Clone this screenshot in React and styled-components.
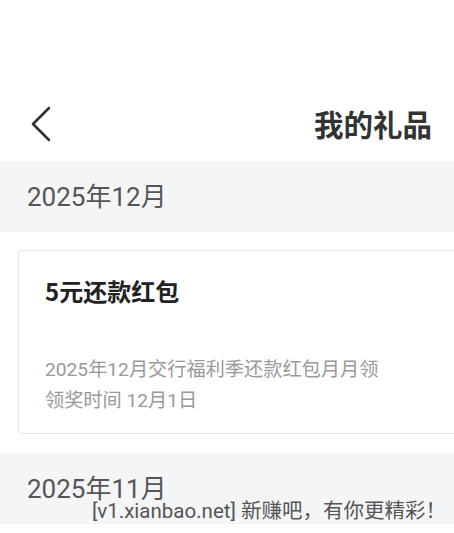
import React from 'react';
import styled, { createGlobalStyle } from 'styled-components';

const GlobalStyle = createGlobalStyle`
  html, body {
    margin: 0;
    padding: 0;
    background: #ffffff;
  }
  body {
    font-family: Roboto, "Noto Sans CJK SC", sans-serif;
    overflow: hidden;
  }
`;

const gifts = [
    {
        month: '2025年12月',
        items: [
            {
                title: '5元还款红包',
                desc: '2025年12月交行福利季还款红包月月领',
                time: '领奖时间 12月1日'
            }
        ]
    },
    {
        month: '2025年11月',
        items: []
    }
];

function BackIcon() {
    return (
        <svg width="24" height="36" viewBox="0 0 24 36" fill="none">
            <path d="M19 2 L3 18 L19 34" stroke="#333" strokeWidth="2.6" strokeLinecap="round" strokeLinejoin="round" />
        </svg>
    );
}

export default function App() {
    return (
        <Page>
            <GlobalStyle />
            <StatusSpace />
            <Header>
                <BackButton><BackIcon /></BackButton>
                <Title>我的礼品</Title>
            </Header>
            {
                gifts.map((group, index) => (
                    <Group key={index}>
                        <MonthBar>{group.month}</MonthBar>
                        {
                            group.items.map((item, i) => (
                                <CardWrap key={i}>
                                    <Card>
                                        <CardTitle>{item.title}</CardTitle>
                                        <CardDesc>
                                            <div>{item.desc}</div>
                                            <div>{item.time}</div>
                                        </CardDesc>
                                    </Card>
                                </CardWrap>
                            ))
                        }
                    </Group>
                ))
            }
            <Watermark>[v1.xianbao.net] 新赚吧，有你更精彩！</Watermark>
        </Page>
    );
}

const Page = styled.div`
  position: relative;
  width: 454px;
  height: 533px;
  overflow: hidden;
  background: #fff;
`;
const StatusSpace = styled.div`
  height: 88px;
`;
const Header = styled.div`
  height: 73px;
  display: flex;
  align-items: center;
  justify-content: space-between;
  padding: 0 22px 0 30px;
`;
const BackButton = styled.div`
  display: flex;
  align-items: center;
  margin-top: -2px;
`;
const Title = styled.div`
  font-family: "Noto Sans CJK SC", sans-serif;
  font-size: 29.5px;
  font-weight: 700;
  color: #333;
  margin-top: -4px;
`;
const Group = styled.div``;
const MonthBar = styled.div`
  height: 71px;
  box-sizing: border-box;
  display: flex;
  align-items: center;
  padding: 0 0 4px 27px;
  background: #f4f5f7;
  font-size: 26px;
  color: #555;
`;
const CardWrap = styled.div`
  padding: 18px 0 19px 18px;
  margin-right: -20px;
`;
const Card = styled.div`
  border: 1px solid #e2e6e8;
  border-radius: 4px;
  padding: 25px 0 0 26px;
  box-sizing: border-box;
  height: 184px;
`;
const CardTitle = styled.div`
  font-family: "Noto Sans CJK SC", sans-serif;
  font-size: 24px;
  font-weight: 700;
  line-height: 30px;
  color: #222;
`;
const CardDesc = styled.div`
  margin-top: 48px;
  font-size: 19.2px;
  line-height: 31px;
  color: #999;
`;
const Watermark = styled.div`
  position: absolute;
  right: 8px;
  top: 497px;
  font-size: 20.5px;
  line-height: 28px;
  color: #555;
`;
